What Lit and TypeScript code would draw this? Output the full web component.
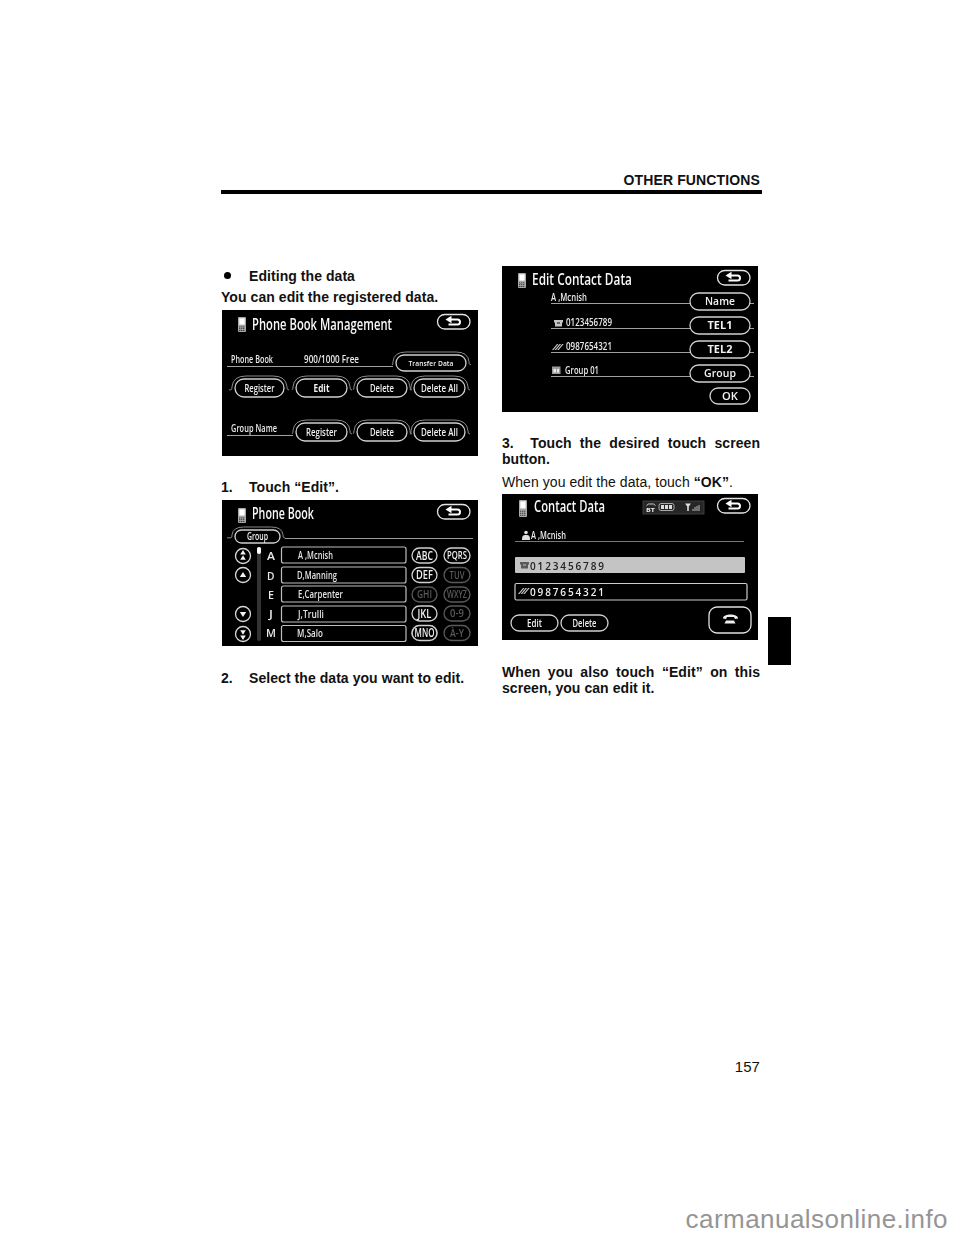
import { LitElement, html, css, svg } from "lit";
import { customElement } from "lit/decorators.js";

const FONT = "'Open Sans','Liberation Sans',sans-serif";

const label = (x: number, y: number, w: number, s: string, size = 10, fill = "#ececec", weight = 600) =>
  svg`<text x=${x} y=${y} font-size=${size} font-weight=${weight} fill=${fill} font-family=${FONT} textLength=${w} lengthAdjust="spacingAndGlyphs">${s}</text>`;

const pill = (x: number, y: number, w: number, h: number, s: string, tw: number, opts: { size?: number; dim?: boolean; weight?: number; stroke?: number } = {}) => {
  const size = opts.size ?? 11;
  const col = opts.dim ? "#5a5a5a" : "#d0d0d0";
  const tcol = opts.dim ? "#5a5a5a" : "#f2f2f2";
  return svg`<rect x=${x} y=${y} width=${w} height=${h} rx=${h / 2} fill="#000" stroke=${col} stroke-width=${opts.stroke ?? 1.3}></rect>
  ${label(x + (w - tw) / 2, y + h / 2 + size * 0.36, tw, s, size, tcol, opts.weight ?? 600)}`;
};

const arc = (x: number, y: number, w: number, h: number, left = 6, right = 5) => {
  const yb = y + h * 0.6;
  const r = x + w;
  return svg`<path d="M${x - left} ${yb}H${x - 4}Q${x - 3} ${yb} ${x - 3} ${yb - 3}Q${x - 2} ${y - 3} ${x + h / 2 + 2} ${y - 3}H${r - h / 2 - 2}Q${r + 2} ${y - 3} ${r + 3} ${yb - 3}Q${r + 3} ${yb} ${r + 4} ${yb}H${r + right}" fill="none" stroke="#8a8a8a" stroke-width="1"></path>`;
};

const phoneIcon = (x: number, y: number, w = 8, h = 15) => svg`
  <rect x=${x} y=${y} width=${w} height=${h} rx="1" fill="#a8a8a8"></rect>
  <rect x=${x + 1.3} y=${y + 1.3} width=${w - 2.6} height=${h * 0.42} fill="#fff"></rect>
  <path d="M${x + 1} ${y + h * 0.66}h${w - 2}M${x + 1} ${y + h * 0.78}h${w - 2}M${x + 1} ${y + h * 0.9}h${w - 2}" stroke="#222" stroke-width=".8" stroke-dasharray="1.4 .6"></path>`;

const back = () => svg`
  <rect x="215.5" y="4.5" width="32.5" height="14.5" rx="7.25" fill="#000" stroke="#e4e4e4" stroke-width="1.3"></rect>
  <path d="M226 9.5h9.500a2.500 2.500 0 0 1 0 5h-9" fill="none" stroke="#fff" stroke-width="2"></path>
  <path d="M229.500 5.800l-6 3.700 6 3.700z" fill="#fff"></path>`;

const roundArrow = (cy: number, kind: string) => {
  const paths: Record<string, string> = {
    upup: `M21 ${cy - 6}l2.8 4.6h-5.6zM21 ${cy - 0.8}l2.8 4.6h-5.6z`,
    up: `M21 ${cy - 3}l3.2 5h-6.4z`,
    down: `M21 ${cy + 3}l3.2 -5h-6.4z`,
    downdown: `M21 ${cy + 6}l2.8 -4.6h-5.6zM21 ${cy + 0.8}l2.8 -4.6h-5.6z`,
  };
  return svg`<circle cx="21" cy=${cy} r="7.5" fill="#000" stroke="#d8d8d8" stroke-width="1.3"></circle><path d=${paths[kind]} fill="#f4f4f4"></path>`;
};

const bookRow = (y: number, name: string, tx: number, tw: number) => svg`
  <rect x="59.5" y=${y} width="124.5" height="16" rx="2" fill="#000" stroke="#bdbdbd" stroke-width="1.2"></rect>
  ${label(tx, y + 11.5, tw, name, 10.5, "#e4e4e4")}`;

const screen1 = svg`<svg class="screen" viewBox="0 0 256 146" width="256" height="146">
  <rect width="256" height="146" fill="#000"></rect>
  ${phoneIcon(16, 7)}
  ${label(30, 20, 140, "Phone Book Management", 17, "#f8f8f8")}
  ${back()}
  ${label(9, 53, 42, "Phone Book")}
  ${label(82, 53, 55, "900/1000 Free")}
  <path d="M5 56.5H171" stroke="#a0a0a0"></path>
  ${arc(174, 45, 70, 16, 3, 5)}
  ${pill(174, 45, 70, 16, "Transfer Data", 45, { size: 7 })}
  ${arc(13, 69, 49, 18)}${arc(74, 69, 51, 18, 4)}${arc(135, 69, 50, 18, 4)}${arc(192, 69, 51, 18, 3)}
  ${pill(13, 69, 49, 18, "Register", 30)}
  ${pill(74, 69, 51, 18, "Edit", 16, { weight: 700 })}
  ${pill(135, 69, 50, 18, "Delete", 24)}
  ${pill(192, 69, 51, 18, "Delete All", 37)}
  ${label(9, 122, 46, "Group Name")}
  <path d="M5 125.5H71" stroke="#a0a0a0"></path>
  ${arc(74, 113, 51, 18, 4)}${arc(135, 113, 50, 18, 4)}${arc(192, 113, 51, 18, 3)}
  ${pill(74, 113, 51, 18, "Register", 31)}
  ${pill(135, 113, 50, 18, "Delete", 24)}
  ${pill(192, 113, 51, 18, "Delete All", 37)}
</svg>`;

const screen2 = svg`<svg class="screen" viewBox="0 0 256 146" width="256" height="146">
  <rect width="256" height="146" fill="#000"></rect>
  ${phoneIcon(16, 8)}
  ${label(30, 19, 62, "Phone Book", 17, "#f8f8f8")}
  ${back()}
  ${arc(13, 30, 45, 13, 8, 5)}
  <path d="M63 38.5H251" stroke="#9a9a9a"></path>
  ${pill(13, 30, 45, 13, "Group", 21, { size: 10 })}
  ${roundArrow(56, "upup")}${roundArrow(75, "up")}${roundArrow(114, "down")}${roundArrow(134, "downdown")}
  <rect x="35" y="47" width="4" height="94" rx="2" fill="#333"></rect>
  <rect x="35" y="47" width="4" height="7" rx="2" fill="#fff"></rect>
  ${label(45, 60, 8, "A", 11, "#e8e8e8")}
  ${label(45, 80, 7.5, "D", 11, "#e8e8e8")}
  ${label(46, 99, 6, "E", 11, "#e8e8e8")}
  ${label(47, 118, 4, "J", 11, "#e8e8e8")}
  ${label(44, 137, 10, "M", 11, "#e8e8e8")}
  ${bookRow(47, "A ,Mcnish", 76, 35)}
  ${bookRow(67, "D,Manning", 75, 40)}
  ${bookRow(86, "E,Carpenter", 76, 45)}
  ${bookRow(106, "J,Trulli", 76, 26)}
  ${bookRow(125.5, "M,Salo", 75, 26)}
  ${pill(190, 48, 25, 15, "ABC", 17, { size: 12 })}
  ${pill(222, 48, 26, 15, "PQRS", 20)}
  ${pill(190, 67.5, 25, 15, "DEF", 17, { size: 12 })}
  ${pill(222, 67.5, 26, 15, "TUV", 15, { dim: true })}
  ${pill(190, 87, 25, 15, "GHI", 15, { dim: true })}
  ${pill(222, 87, 26, 15, "WXYZ", 20, { dim: true })}
  ${pill(190, 106, 25, 15, "JKL", 14, { size: 12 })}
  ${pill(222, 106, 26, 15, "0-9", 14, { dim: true })}
  ${pill(190, 125.5, 25, 15, "MNO", 20, { size: 12, stroke: 1.6 })}
  ${pill(222, 125.5, 26, 15, "À-Y", 14, { dim: true })}
</svg>`;

const line3 = (y: number) => svg`<path d="M49 ${y + 0.5}H188" stroke="#a0a0a0"></path><path d="M248 ${y + 0.5}H252" stroke="#a0a0a0"></path>`;
const telIcon = (x: number, y: number, fill = "#c4c4c4") => svg`
  <path d="M${x} ${y + 1}h9v2.500h-9zM${x + 1} ${y + 3.500}h2v1h3v-1h2v4h-7z" fill=${fill}></path>`;
const mobIcon = (x: number, y: number, fill = "#c4c4c4") => svg`
  <path d="M${x} ${y + 7}l5-6h1.500l-5 6zM${x + 2.600} ${y + 7}l5-6h1.500l-5 6zM${x + 5.200} ${y + 7}l5-6h1.500l-5 6z" fill=${fill}></path>`;

const screen3 = svg`<svg class="screen" viewBox="0 0 256 146" width="256" height="146">
  <rect width="256" height="146" fill="#000"></rect>
  ${phoneIcon(16, 7)}
  ${label(30, 19, 100, "Edit Contact Data", 17, "#f8f8f8")}
  ${back()}
  ${label(49, 35, 36, "A ,Mcnish")}${line3(37)}
  ${pill(188, 27, 60, 17, "Name", 30)}
  ${telIcon(52, 53)}${label(64, 60, 46, "0123456789")}${line3(62)}
  ${pill(188, 51, 60, 17, "TEL1", 25, { weight: 700 })}
  ${mobIcon(50, 77)}${label(64, 84, 46, "0987654321")}${line3(86)}
  ${pill(188, 75, 60, 17, "TEL2", 25, { weight: 700 })}
  <rect x="50" y="100.500" width="8.500" height="7.500" fill="#9a9a9a"></rect>
  <path d="M51.500 103h2.500v3.500h-2.500zM55 103h2v3.500h-2z" fill="#e8e8e8"></path>
  ${label(63, 108, 34, "Group 01")}${line3(110)}
  ${pill(188, 99, 60, 17, "Group", 32)}
  ${pill(208, 122, 40, 16, "OK", 16)}
</svg>`;

const screen4 = svg`<svg class="screen" viewBox="0 0 256 146" width="256" height="146">
  <rect width="256" height="146" fill="#000"></rect>
  ${phoneIcon(17, 6, 8, 17)}
  ${label(32, 18, 71, "Contact Data", 17, "#f8f8f8")}
  <rect x="141" y="7" width="61" height="13" fill="#262626" stroke="#4a4a4a" stroke-width=".8"></rect>
  <path d="M144.500 11.500l2-1.500h5l2 1.500" fill="none" stroke="#ccc"></path>
  ${label(144, 17.500, 9, "BT", 5.5, "#eee", 700)}
  <rect x="157" y="9.500" width="15" height="7" rx="2" fill="none" stroke="#aaa"></rect>
  <path d="M159 11h3v4h-3zM163 11h3v4h-3zM167 11h3v4h-3z" fill="#ddd"></path>
  <path d="M183 9.500h6l-2.200 3v4.500h-1.600v-4.500z" fill="#ddd"></path>
  <path d="M191 17v-2M193 17v-4M195 17v-5M197 17v-6" stroke="#bbb" stroke-width="1"></path>
  ${back()}
  <circle cx="24" cy="38.500" r="1.800" fill="#e0e0e0"></circle>
  <path d="M20 46c0-4 .8-5 4-5s4 1 4 5z" fill="#e0e0e0"></path>
  ${label(29, 45, 35, "A ,Mcnish")}
  <path d="M13 47.500H242" stroke="#777"></path>
  <rect x="13" y="63" width="230" height="16" rx="1" fill="#c4c4c4"></rect>
  ${telIcon(18, 67, "#5a5a5a")}
  <text x="28" y="75.500" font-size="10" font-weight="600" fill="#222" font-family=${FONT} textLength="74">0123456789</text>
  <rect x="13" y="89.500" width="232" height="16.500" rx="1.500" fill="#000" stroke="#ccc" stroke-width="1.200"></rect>
  ${mobIcon(16, 93)}
  <text x="28" y="102" font-size="10" font-weight="600" fill="#eee" font-family=${FONT} textLength="74">0987654321</text>
  ${pill(9, 121, 47, 16, "Edit", 15)}
  ${pill(59, 121, 47, 16, "Delete", 24)}
  <rect x="207" y="113" width="42" height="26" rx="8" fill="#000" stroke="#e0e0e0" stroke-width="1.300"></rect>
  <path d="M221 124.500c0-3 4-4 7.500-4s7.500 1 7.500 4l-3 .5-1-2h-7l-1 2z" fill="#eee"></path>
  <path d="M224 126.500h8l1.500 3h-11z" fill="#eee"></path>
</svg>`;

@customElement("app-root")
export class AppRoot extends LitElement {
  static styles = css`
    :host { display: block; width: 960px; height: 1242px; overflow: hidden; background: #fff; color: #111; font-family: "Liberation Sans", Arial, sans-serif; font-size: 14px; line-height: 16px; letter-spacing: .06px; }
    .page { display: flex; padding-left: 221px; height: 1242px; box-sizing: border-box; position: relative; }
    .main { width: 541px; display: flex; flex-direction: column; }
    .head { margin-top: 172px; padding-right: 2px; text-align: right; font-weight: 700; font-size: 14px; letter-spacing: .13px; height: 18px; }
    .rule { height: 3.5px; background: #000; }
    .cols { display: grid; grid-template-columns: 258px 258px; column-gap: 23px; height: 864px; }
    .col { display: flex; flex-direction: column; }
    .left { padding-top: 74px; }
    .right { padding-top: 72px; }
    .screen { display: block; filter: blur(.45px); }
    p { margin: 0; font-weight: 700; }
    .bullet { display: flex; align-items: center; gap: 18px; padding-left: 3px; font-weight: 700; }
    .dot { width: 7px; height: 7px; border-radius: 50%; background: #000; }
    .lead { margin-top: 5px; margin-bottom: 5px; }
    .s1 { margin-left: 1px; }
    .m1 { margin-top: 23px; margin-bottom: 5px; }
    .m2 { margin-top: 24px; }
    .n { display: inline-block; width: 28px; }
    .just { text-align: justify; }
    .m3 { margin-top: 23px; }
    .m4 { margin-top: 7px; margin-bottom: 4px; }
    .m5 { margin-top: 24px; }
    .plain { font-weight: 400; }
    .plain b { font-weight: 700; }
    .num { text-align: right; padding-right: 2px; font-size: 15px; line-height: 18px; }
    .tab { width: 23px; height: 48px; margin: 617px 0 0 6px; background: #000; }
    .mark { position: absolute; right: 12px; bottom: 7px; font-size: 26px; line-height: 32px; color: #959595; letter-spacing: .45px; }
  `;

  render() {
    return html`<div class="page">
      <div class="main">
        <div class="head">OTHER FUNCTIONS</div>
        <div class="rule"></div>
        <div class="cols">
          <div class="col left">
            <div class="bullet"><span class="dot"></span><span>Editing the data</span></div>
            <p class="lead">You can edit the registered data.</p>
            <div class="s1">${screen1}</div>
            <p class="m1"><span class="n">1.</span>Touch “Edit”.</p>
            <div class="s1">${screen2}</div>
            <p class="m2"><span class="n">2.</span>Select the data you want to edit.</p>
          </div>
          <div class="col right">
            <div>${screen3}</div>
            <p class="m3 just">3.&nbsp; Touch the desired touch screen button.</p>
            <p class="m4 plain">When you edit the data, touch <b>“OK”</b>.</p>
            <div>${screen4}</div>
            <p class="m5 just">When you also touch “Edit” on this screen, you can edit it.</p>
          </div>
        </div>
        <div class="num">157</div>
      </div>
      <div class="tab"></div>
      <div class="mark">carmanualsonline.info</div>
    </div>`;
  }
}
